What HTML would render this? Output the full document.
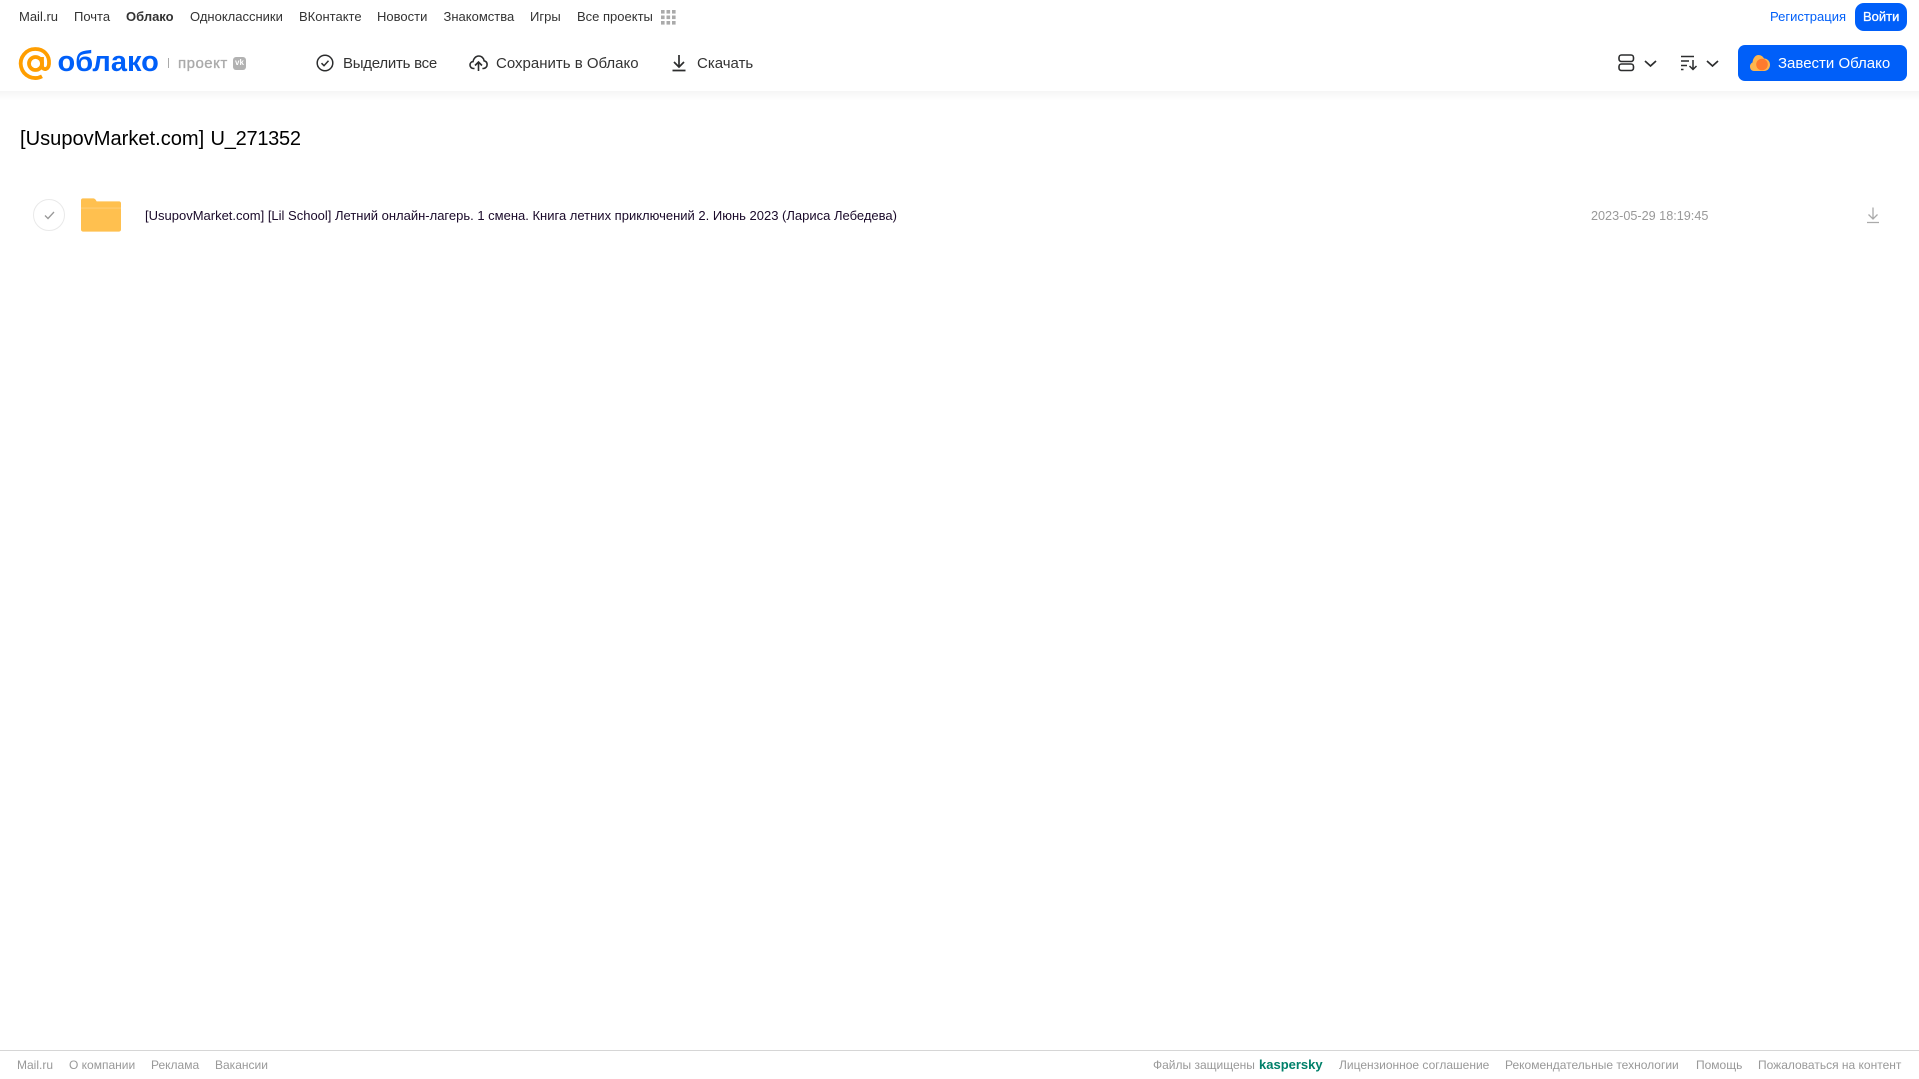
<!DOCTYPE html>
<html lang="ru"><head><meta charset="utf-8"><title>Облако</title>
<style>
html,body{margin:0;padding:0;background:#fff}
body{width:1919px;height:1079px;position:relative;overflow:hidden;font-family:"Liberation Sans",Arial,sans-serif}
.t{position:absolute;white-space:nowrap;line-height:20px}
.n{top:7px;font-size:13px;color:#333}
.a{top:54px;font-size:15px;color:#333}
.f{top:1055px;font-size:12px;color:#999}
svg{position:absolute;overflow:visible}
#sh{position:absolute;left:0;top:91px;width:1919px;height:10px;background:linear-gradient(#f5f5f5,#fff)}
.b{position:absolute;background:#005ff9}
</style></head><body>
<div id="sh"></div>
<span class="t n" style="left:19px">Mail.ru</span>
<span class="t n" style="left:74px">Почта</span>
<span class="t n" style="left:126px;font-weight:bold">Облако</span>
<span class="t n" style="left:190px">Одноклассники</span>
<span class="t n" style="left:299px">ВКонтакте</span>
<span class="t n" style="left:377px">Новости</span>
<span class="t n" style="left:443.500px">Знакомства</span>
<span class="t n" style="left:530px">Игры</span>
<span class="t n" style="left:577px">Все проекты</span>
<svg style="left:661px;top:10px" width="15" height="15" fill="#aaa"><rect x="0" y="0" width="3.6" height="3.6"/><rect x="5.5" y="0" width="3.6" height="3.6"/><rect x="11" y="0" width="3.6" height="3.6"/><rect x="0" y="5.5" width="3.6" height="3.6"/><rect x="5.5" y="5.5" width="3.6" height="3.6"/><rect x="11" y="5.5" width="3.6" height="3.6"/><rect x="0" y="11" width="3.6" height="3.6"/><rect x="5.5" y="11" width="3.6" height="3.6"/><rect x="11" y="11" width="3.6" height="3.6"/></svg>
<span class="t n" style="left:1770px;color:#005ff9">Регистрация</span>
<div class="b" style="left:1855px;top:3px;width:52px;height:28px;border-radius:9px"></div>
<span class="t n" style="left:1863px;color:#fff;-webkit-text-stroke:.3px #fff">Войти</span>

<svg style="left:19px;top:47px" width="33" height="33" viewBox="0 0 33 33" fill="none" stroke="#ff9e00" stroke-width="3.800"><circle cx="16.5" cy="16.5" r="6.500"/><path d="M23 10v8.500c0 5 6.500 5 7-1.500c.8-9-5.500-15-13.500-15a14.500 14.500 0 1 0 6.500 27.300"/></svg>
<span class="t" style="left:57.500px;top:44px;font-size:29px;line-height:36px;font-weight:bold;color:#005ff9">облако</span>
<div style="position:absolute;left:168px;top:58px;width:1px;height:10px;background:#aaa"></div>
<span class="t" style="left:178px;top:53.500px;font-size:15px;color:#aaa;letter-spacing:.5px;-webkit-text-stroke:.35px #aaa">проект</span>
<div style="position:absolute;left:233px;top:57px;width:13px;height:13px;border-radius:3px;background:#b2b2b2"></div>
<span class="t" style="left:235px;top:53px;font-size:8px;font-weight:bold;color:#fff">vk</span>

<svg style="left:316px;top:54px" width="18" height="18" viewBox="0 0 18 18" fill="none" stroke="#2c2d2e" stroke-width="1.500"><circle cx="9" cy="9" r="7.800"/><path d="M5.500 9.200l2.500 2.500 4.500-5"/></svg>
<span class="t a" style="left:343px;letter-spacing:-.25px">Выделить все</span>
<svg style="left:469px;top:54px" width="19" height="18" viewBox="0 0 19 18" fill="none" stroke="#2c2d2e" stroke-width="1.600"><path d="M5.500 14.500H4.500C2.500 14.500 1 13 1 11c0-1.800 1.300-3.200 3-3.400C4.500 4.500 6.800 2 9.700 2c2.800 0 5 2.100 5.400 4.800 1.800.4 3 1.900 3 3.800 0 2.100-1.600 3.900-3.700 3.900h-1"/><path d="M9.500 17V8.500M6 11.500l3.500-3.500 3.500 3.500"/></svg>
<span class="t a" style="left:496px">Сохранить в Облако</span>
<svg style="left:671px;top:54px" width="16" height="18" viewBox="0 0 16 18" fill="none" stroke="#2c2d2e" stroke-width="1.700"><path d="M8 1v11.500M3 8l5 5 5-5M1.500 16.500h13"/></svg>
<span class="t a" style="left:697px">Скачать</span>

<svg style="left:1618px;top:54px" width="17" height="18" viewBox="0 0 17 18" fill="none" stroke="#2c2d2e" stroke-width="1.600"><rect x="1" y="1" width="14.500" height="6.500" rx="2.500"/><rect x="1" y="10" width="14.500" height="6.500" rx="2.500"/></svg>
<svg style="left:1644px;top:60px" width="13" height="8" viewBox="0 0 13 8" fill="none" stroke="#2c2d2e" stroke-width="1.700"><path d="M1 1l5.500 5L12 1"/></svg>
<svg style="left:1681px;top:55px" width="17" height="16" viewBox="0 0 17 16" fill="none" stroke="#2c2d2e" stroke-width="1.500"><path d="M0 1.500h13M0 6h8M0 10.500h6M0 14.500h2.500M12 5v9.500M8.500 11l3.500 3.500 3.500-3.500"/></svg>
<svg style="left:1706px;top:60px" width="13" height="8" viewBox="0 0 13 8" fill="none" stroke="#2c2d2e" stroke-width="1.700"><path d="M1 1l5.500 5L12 1"/></svg>
<div class="b" style="left:1738px;top:45px;width:169px;height:36px;border-radius:7px"></div>
<svg style="left:1750px;top:54px" width="20" height="18" viewBox="0 0 20 18"><path d="M4 17C1.500 17 0 15 0 12.500c0-2 1.200-3.500 2.500-4C3 4 5.500 1 8.500 1c2.500 0 4.500 1.500 5.500 3.500 3.500 0 6 2.800 6 6.200 0 3.500-2.500 6.300-6 6.300z" fill="#ffb54d"/><circle cx="12" cy="10.500" r="5.800" fill="#ff7a2e"/></svg>
<span class="t a" style="left:1778px;color:#fff">Завести Облако</span>

<span class="t" style="left:20px;top:126.500px;font-size:20.100px;line-height:24px;color:#000">[UsupovMarket.com]</span>
<span class="t" style="left:210.500px;top:126.500px;font-size:20px;line-height:24px;color:#000;letter-spacing:-.25px">U_271352</span>

<div style="position:absolute;left:33px;top:199px;width:30px;height:30px;border:1px solid #e9e9e9;border-radius:50%"></div>
<svg style="left:44px;top:211px" width="11" height="9" viewBox="0 0 11 9" fill="none" stroke="#999" stroke-width="1.300"><path d="M1 4.500l3 3 6-6.500"/></svg>
<svg style="left:81px;top:198px" width="40" height="34" viewBox="0 0 41 34"><path d="M2 0h10c2 0 3 1 4 3h23c1.200 0 2 .8 2 2v27c0 1.200-.8 2-2 2H2c-1.200 0-2-.8-2-2V2C0 .8.800 0 2 0z" fill="#ffc04f"/><path d="M0 9h41v2H0z" fill="#ffd080" opacity=".5"/></svg>
<span class="t" style="left:145px;top:205.500px;font-size:13px;color:#1a0a2a">[UsupovMarket.com] [Lil School] Летний онлайн-лагерь. 1 смена. Книга летних приключений 2. Июнь 2023 (Лариса Лебедева)</span>
<span class="t" style="left:1591px;top:205.500px;font-size:12.650px;color:#999">2023-05-29 18:19:45</span>
<svg style="left:1866px;top:207px" width="14" height="17" viewBox="0 0 14 17" fill="none" stroke="#aaa" stroke-width="1.300"><path d="M7 .5v11M2.500 7.500L7 12l4.500-4.500M1 15.500h12"/></svg>

<div style="position:absolute;left:0;top:1050px;width:1919px;height:1px;background:#d6d6d6"></div>
<span class="t f" style="left:17px">Mail.ru</span>
<span class="t f" style="left:69px">О компании</span>
<span class="t f" style="left:151px">Реклама</span>
<span class="t f" style="left:215px">Вакансии</span>
<span class="t f" style="left:1153px">Файлы защищены</span>
<span class="t f" style="left:1259px;color:#00806a;font-weight:bold;font-size:13px">kaspersky</span>
<span class="t f" style="left:1339px">Лицензионное соглашение</span>
<span class="t f" style="left:1505px">Рекомендательные технологии</span>
<span class="t f" style="left:1696px">Помощь</span>
<span class="t f" style="left:1758px">Пожаловаться на контент</span>
</body></html>
